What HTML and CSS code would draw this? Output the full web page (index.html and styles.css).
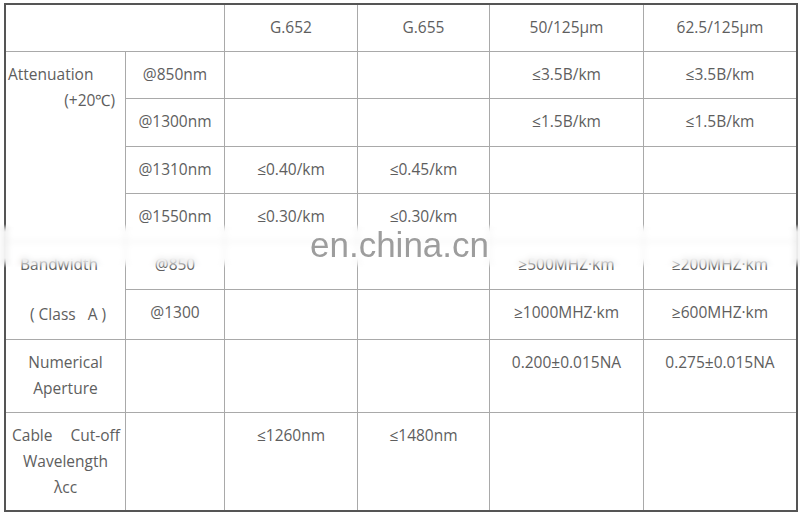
FILE: index.html
```html
<!DOCTYPE html>
<html>
<head>
<meta charset="utf-8">
<link rel="stylesheet" href="styles.css">
</head>
<body>
<div class="sheet">
  <div class="grid">
    <div class="c corner"></div>
    <div class="c">G.652</div>
    <div class="c">G.655</div>
    <div class="c">50/125μm</div>
    <div class="c">62.5/125μm</div>

    <div class="c lead span4">
      <div class="l-left">Attenuation</div>
      <div class="l-right">(+20℃)</div>
    </div>
    <div class="c">@850nm</div>
    <div class="c"></div>
    <div class="c"></div>
    <div class="c">≤3.5B/km</div>
    <div class="c">≤3.5B/km</div>

    <div class="c">@1300nm</div>
    <div class="c"></div>
    <div class="c"></div>
    <div class="c">≤1.5B/km</div>
    <div class="c">≤1.5B/km</div>

    <div class="c">@1310nm</div>
    <div class="c">≤0.40/km</div>
    <div class="c">≤0.45/km</div>
    <div class="c"></div>
    <div class="c"></div>

    <div class="c">@1550nm</div>
    <div class="c">≤0.30/km</div>
    <div class="c">≤0.30/km</div>
    <div class="c"></div>
    <div class="c"></div>

    <div class="c lead span2">
      <div class="bw">Bandwidth</div>
      <div class="cls">(&nbsp;Class&nbsp;&nbsp;&nbsp;A&nbsp;)</div>
    </div>
    <div class="c">@850</div>
    <div class="c"></div>
    <div class="c"></div>
    <div class="c">≥500MHZ·km</div>
    <div class="c">≥200MHZ·km</div>

    <div class="c">@1300</div>
    <div class="c"></div>
    <div class="c"></div>
    <div class="c">≥1000MHZ·km</div>
    <div class="c">≥600MHZ·km</div>

    <div class="c lead">
      <div>Numerical</div>
      <div>Aperture</div>
    </div>
    <div class="c"></div>
    <div class="c"></div>
    <div class="c"></div>
    <div class="c">0.200±0.015NA</div>
    <div class="c">0.275±0.015NA</div>

    <div class="c lead">
      <div class="just"><span>Cable</span><span>Cut-off</span></div>
      <div>Wavelength</div>
      <div>λcc</div>
    </div>
    <div class="c"></div>
    <div class="c">≤1260nm</div>
    <div class="c">≤1480nm</div>
    <div class="c"></div>
    <div class="c"></div>
  </div>
  <div class="band"></div>
  <div class="mark">en.china.cn</div>
</div>
</body>
</html>
```

FILE: styles.css
```css
html, body {
  margin: 0;
  padding: 0;
  background: #ffffff;
}

.sheet {
  position: relative;
  width: 800px;
  height: 516px;
  padding: 3px 0 0 4px;
  box-sizing: border-box;
}

.grid {
  display: grid;
  grid-template-columns: 119px 98px 132px 131px 153px 152px;
  grid-template-rows: 46px 46px 47px 46px 47px 47px 49px 72px 97px;
  gap: 1px;
  background: #a9a9a9;
  border: 2px solid #555555;
  width: max-content;
  font-family: "Open Sans", "Liberation Sans", sans-serif;
  font-size: 15.5px;
  line-height: 26px;
  color: #5e5e5e;
}

.c {
  background: #ffffff;
  padding-top: 9px;
  text-align: center;
  white-space: nowrap;
}

.corner {
  grid-column: span 2;
}

.span4 {
  grid-row: span 4;
}

.span2 {
  grid-row: span 2;
}

.l-left {
  text-align: left;
  padding-left: 2px;
}

.l-right {
  text-align: right;
  padding-right: 10px;
}

.bw {
  text-align: left;
  padding-left: 14px;
}

.cls {
  text-align: left;
  padding-left: 24px;
  margin-top: 24px;
}

.just {
  display: flex;
  justify-content: space-between;
  padding: 0 5px 0 6px;
}

.band {
  position: absolute;
  left: 0;
  top: 224px;
  width: 800px;
  height: 44px;
  background: rgba(255, 255, 255, 0.72);
  backdrop-filter: blur(3px);
  -webkit-mask-image: linear-gradient(to bottom, transparent 0, #000 8px, #000 34px, transparent 44px);
  mask-image: linear-gradient(to bottom, transparent 0, #000 8px, #000 34px, transparent 44px);
}

.mark {
  position: absolute;
  left: 310px;
  top: 229px;
  font-family: "Liberation Sans", Arial, sans-serif;
  font-size: 35px;
  line-height: 32px;
  color: #9d9d9d;
}
```
